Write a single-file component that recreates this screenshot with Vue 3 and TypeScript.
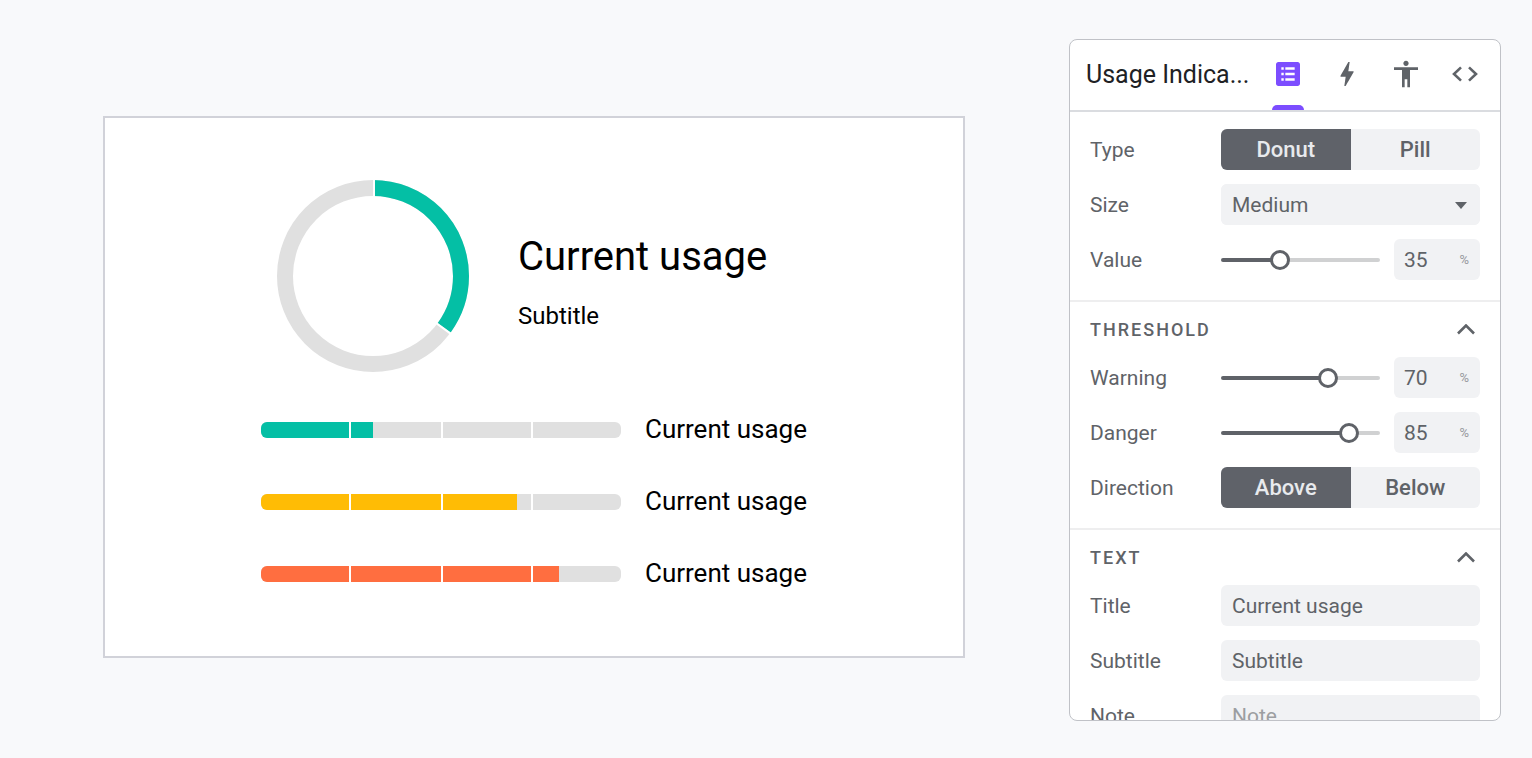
<script setup lang="ts">
import { computed, ref } from 'vue'

interface Bar {
  name: string
  level: 'normal' | 'warning' | 'danger'
  length: number
}

const types = ['Donut', 'Pill']
const directions = ['Above', 'Below']

const type = ref('Donut')
const size = ref('Medium')
const value = ref(35)
const warning = ref(70)
const danger = ref(85)
const direction = ref('Above')
const title = ref('Current usage')
const subtitle = ref('Subtitle')
const note = ref('')

const bars: Bar[] = [
  { name: 'bar-1', level: 'normal', length: 112 },
  { name: 'bar-2', level: 'warning', length: 256 },
  { name: 'bar-3', level: 'danger', length: 298 },
]
const dividers = [88, 180, 270]

const angle = computed(() => value.value * 3.6)
const dash = computed(() => `${value.value} 100`)

// The thumb's centre travels 10px inside each end of the track.
const fillStop = (v: number) => ({ '--stop': `calc(10px + (100% - 20px) * ${v / 100})` })
</script>

<template>
  <div class="page">
    <main class="stage">
      <div class="demo">
        <section class="donut-row">
          <svg class="donut" viewBox="0 0 192 192" role="img" aria-label="Usage">
            <circle class="ring" cx="96" cy="96" r="88" />
            <circle
              class="arc" cx="96" cy="96" r="88" pathLength="100"
              :stroke-dasharray="dash" transform="rotate(-90 96 96)"
            />
            <rect class="gap" x="96" y="-1" width="2" height="18" />
            <rect class="gap" x="96" y="-1" width="2" height="18" :transform="`rotate(${angle} 96 96)`" />
          </svg>
          <div class="donut-text">
            <h1>{{ title }}</h1>
            <p>{{ subtitle }}</p>
          </div>
        </section>
        <section v-for="bar in bars" :key="bar.name" class="bar-row">
          <svg class="bar" viewBox="0 0 360 16" role="img" :aria-label="bar.level">
            <defs>
              <clipPath :id="bar.name"><rect width="360" height="16" rx="6" /></clipPath>
            </defs>
            <g :clip-path="`url(#${bar.name})`">
              <rect class="rail" width="360" height="16" />
              <rect :class="bar.level" :width="bar.length" height="16" />
              <rect v-for="d in dividers" :key="d" class="gap" :x="d" width="2" height="16" />
            </g>
          </svg>
          <span>{{ title }}</span>
        </section>
      </div>
    </main>

    <aside class="panel">
      <header class="panel-head">
        <h2>Usage Indica...</h2>
        <nav class="tabs">
          <button type="button" class="tab active" aria-label="Properties">
            <svg viewBox="0 0 24 24">
              <path fill-rule="evenodd" d="M4.8 3h14.4c1 0 1.8.8 1.8 1.8v14.4c0 1-.8 1.8-1.8 1.8H4.8c-1 0-1.8-.8-1.8-1.8V4.8C3 3.8 3.8 3 4.8 3zM7 7v1.8h1.8V7zm3 0v1.8h7V7zm-3 4.1v1.8h1.8v-1.8zm3 0v1.8h7v-1.8zm-3 4.1v1.8h1.8v-1.8zm3 0v1.8h7v-1.8z" />
            </svg>
          </button>
          <button type="button" class="tab" aria-label="Interactions">
            <svg viewBox="0 0 24 24">
              <path d="M11 21h-1l1-7H7.5c-.58 0-.57-.32-.38-.66.19-.34.05-.08.07-.12C8.48 10.94 10.42 7.54 13 3h1l-1 7h3.5c.49 0 .56.33.47.51l-.07.15C12.96 17.55 11 21 11 21z" />
            </svg>
          </button>
          <button type="button" class="tab" aria-label="Accessibility">
            <svg viewBox="0 0 24 24">
              <path d="M12 2c1.1 0 2 .9 2 2s-.9 2-2 2-2-.9-2-2 .9-2 2-2zm9 7h-6v13h-2v-6h-2v6H9V9H3V7h18v2z" />
            </svg>
          </button>
          <button type="button" class="tab" aria-label="Code">
            <svg viewBox="0 0 32 32">
              <path class="line" d="M12 9.4L5 16l7 6.6M20 9.4L27 16l-7 6.6" />
            </svg>
          </button>
        </nav>
      </header>

      <div class="panel-body">
        <section class="group first">
          <div class="row">
            <span id="type-label" class="label">Type</span>
            <div class="segmented" role="group" aria-labelledby="type-label">
              <button v-for="t in types" :key="t" type="button" :aria-pressed="type === t" @click="type = t">{{ t }}</button>
            </div>
          </div>
          <div class="row">
            <label class="label" for="size">Size</label>
            <div class="select">
              <select id="size" v-model="size" class="field">
                <option>Small</option>
                <option>Medium</option>
                <option>Large</option>
              </select>
              <svg class="caret" viewBox="0 0 12 7"><path d="M0 0h12L6 7z" /></svg>
            </div>
          </div>
          <div class="row">
            <label class="label" for="value">Value</label>
            <input id="value" v-model.number="value" type="range" :style="fillStop(value)">
            <div class="number">
              <input v-model.number="value" type="text" aria-label="Value percent"><span>%</span>
            </div>
          </div>
        </section>

        <section class="group">
          <button type="button" class="group-head">
            THRESHOLD
            <svg viewBox="0 0 18 12"><path class="line" d="M1 9.5L9 1.5l8 8" /></svg>
          </button>
          <div class="row">
            <label class="label" for="warning">Warning</label>
            <input id="warning" v-model.number="warning" type="range" :style="fillStop(warning)">
            <div class="number">
              <input v-model.number="warning" type="text" aria-label="Warning percent"><span>%</span>
            </div>
          </div>
          <div class="row">
            <label class="label" for="danger">Danger</label>
            <input id="danger" v-model.number="danger" type="range" :style="fillStop(danger)">
            <div class="number">
              <input v-model.number="danger" type="text" aria-label="Danger percent"><span>%</span>
            </div>
          </div>
          <div class="row">
            <span id="direction-label" class="label">Direction</span>
            <div class="segmented" role="group" aria-labelledby="direction-label">
              <button v-for="d in directions" :key="d" type="button" :aria-pressed="direction === d" @click="direction = d">{{ d }}</button>
            </div>
          </div>
        </section>

        <section class="group">
          <button type="button" class="group-head">
            TEXT
            <svg viewBox="0 0 18 12"><path class="line" d="M1 9.5L9 1.5l8 8" /></svg>
          </button>
          <div class="row">
            <label class="label" for="title">Title</label>
            <input id="title" v-model="title" class="field" type="text">
          </div>
          <div class="row">
            <label class="label" for="subtitle">Subtitle</label>
            <input id="subtitle" v-model="subtitle" class="field" type="text">
          </div>
          <div class="row">
            <label class="label" for="note">Note</label>
            <input id="note" v-model="note" class="field" type="text" placeholder="Note">
          </div>
        </section>
      </div>
    </aside>
  </div>
</template>

<style>
body {
  margin: 0;
  background: #f8f9fb;
}
</style>

<style scoped>
* {
  box-sizing: border-box;
}

.page {
  display: grid;
  grid-template-columns: minmax(0, 1fr) 432px;
  gap: 104px;
  align-items: start;
  min-height: 100vh;
  padding: 39px 31px 37px 103px;
  background: #f8f9fb;
  font-family: Roboto, sans-serif;
}

button,
input,
select {
  margin: 0;
  padding: 0;
  border: 0;
  background: none;
  color: inherit;
  font: inherit;
}

/* Preview */
.stage {
  display: flex;
  justify-content: center;
  margin-top: 77px;
  padding: 62px 0 46px;
  border: 2px solid #d1d2d9;
  background: #fff;
  color: #000;
}

.donut-row {
  display: flex;
  align-items: center;
  gap: 49px;
  margin-bottom: 22px;
  padding-left: 16px;
}

.donut {
  width: 192px;
  height: 192px;
}

.ring,
.arc {
  fill: none;
  stroke: #e0e0e0;
  stroke-width: 16;
}

.arc {
  stroke: #04bfa5;
}

.gap {
  fill: #fff;
}

.donut-text {
  padding-top: 13px;
}

.donut-text h1 {
  margin: 0 0 19px;
  font-size: 40px;
  line-height: 48px;
  font-weight: 400;
}

.donut-text p {
  margin: 0;
  font-size: 24px;
  line-height: 32px;
}

.bar-row {
  display: flex;
  align-items: center;
  gap: 24px;
  height: 72px;
  font-size: 26px;
  line-height: 32px;
}

.bar-row span {
  padding-bottom: 2px;
}

.bar {
  width: 360px;
  height: 16px;
}

.rail {
  fill: #e0e0e0;
}

.normal {
  fill: #04bfa5;
}

.warning {
  fill: #ffbc05;
}

.danger {
  fill: #ff6e40;
}

/* Inspector */
.panel {
  display: flex;
  flex-direction: column;
  max-height: calc(100vh - 76px);
  overflow: hidden;
  border: 1px solid #c0c2c7;
  border-radius: 8px;
  background: #fff;
  color: #5f6368;
  font-size: 21px;
}

.panel-head {
  display: flex;
  flex: none;
  justify-content: space-between;
  height: 72px;
  padding: 0 19px 0 16px;
  border-bottom: 2px solid #dadce0;
}

.panel-head h2 {
  margin: 0;
  color: #202124;
  font-size: 25px;
  line-height: 69px;
  font-weight: 400;
  white-space: nowrap;
}

.tabs {
  display: flex;
  gap: 27px;
}

.tab {
  display: flex;
  align-items: center;
  width: 32px;
  padding-bottom: 3px;
  cursor: pointer;
  position: relative;
}

.tab svg {
  width: 32px;
  height: 32px;
  fill: #5f6368;
}

.tab.active svg {
  fill: #7c4dff;
}

.tab.active::after {
  content: '';
  position: absolute;
  right: 0;
  bottom: 0;
  left: 0;
  height: 5px;
  border-radius: 5px 5px 0 0;
  background: #7c4dff;
}

.tab .line,
.line {
  fill: none;
  stroke: #5f6368;
  stroke-width: 2.6;
}

.panel-body {
  min-height: 0;
  overflow-y: auto;
  scrollbar-width: none;
}

.group {
  display: flex;
  flex-direction: column;
  gap: 14px;
  padding: 0 20px 20px;
}

.group.first {
  padding-top: 17px;
}

.group + .group {
  border-top: 2px solid #eeeeef;
}

.group-head {
  display: flex;
  align-items: center;
  justify-content: space-between;
  height: 55px;
  margin-bottom: -14px;
  padding-right: 5px;
  font-size: 18px;
  font-weight: 500;
  letter-spacing: 2px;
  cursor: pointer;
}

.group-head svg {
  width: 18px;
  height: 12px;
}

.row {
  display: flex;
  align-items: center;
  height: 41px;
}

.label {
  flex: none;
  width: 131px;
}

.field,
.segmented,
.select {
  flex: 1;
  min-width: 0;
  height: 41px;
  border-radius: 6px;
  background: #f1f2f4;
}

.field {
  padding: 0 11px;
}

.field::placeholder {
  color: #9c9ea1;
  opacity: 1;
}

.select {
  display: flex;
  position: relative;
}

.select .field {
  appearance: none;
}

.caret {
  position: absolute;
  top: 18px;
  right: 13px;
  width: 12px;
  height: 7px;
  fill: #5f6368;
  pointer-events: none;
}

.segmented {
  display: grid;
  grid-template-columns: 1fr 1fr;
  overflow: hidden;
}

.segmented button {
  font-size: 22px;
  font-weight: 500;
  cursor: pointer;
}

.segmented button[aria-pressed='true'] {
  background: #5f6269;
  color: #e8eaed;
}

input[type='range'] {
  flex: 1;
  min-width: 0;
  height: 20px;
  appearance: none;
}

input[type='range']::-webkit-slider-runnable-track {
  height: 4px;
  border-radius: 2px;
  background: linear-gradient(to right, #5f6268 var(--stop), #d0d1d2 var(--stop));
}

input[type='range']::-webkit-slider-thumb {
  width: 20px;
  height: 20px;
  margin-top: -8px;
  appearance: none;
  border: 3px solid #5f6268;
  border-radius: 50%;
  background: #fff;
}

.number {
  display: flex;
  align-items: center;
  justify-content: space-between;
  width: 86px;
  height: 41px;
  margin-left: 14px;
  padding: 0 11px 0 10px;
  border-radius: 6px;
  background: #f1f2f4;
}

.number input {
  width: 40px;
}

.number span {
  color: #97999d;
  font-size: 13px;
}
</style>
